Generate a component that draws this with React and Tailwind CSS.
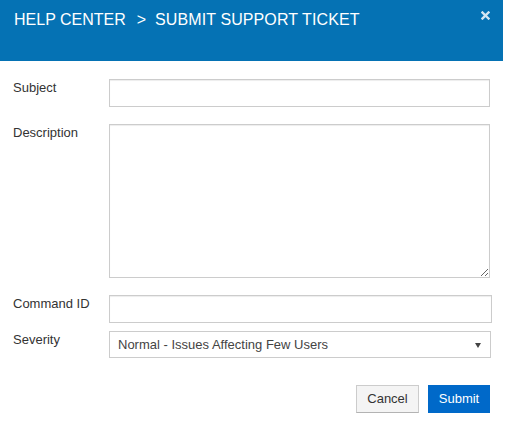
import React from "react";

function Field({ label, children, className = "" }) {
  return (
    <div className={`flex items-start ${className}`}>
      <label className="w-[96px] shrink-0 pt-[1px] text-[13px] leading-[16px] text-[#333]">
        {label}
      </label>
      {children}
    </div>
  );
}

export default function App() {
  const inputCls =
    "h-[28px] border border-[#ccc] bg-white shadow-[inset_0_1px_1px_rgba(0,0,0,0.075)] outline-none px-2 text-[13px] text-[#555]";

  return (
    <div
      className="w-[510px] h-[441px] bg-white"
      style={{ fontFamily: '"Liberation Sans", Arial, sans-serif' }}
    >
      <div className="w-[503px]">
        <div className="relative h-[61px] bg-[#0572b4] pl-[14px] pt-[10px]">
          <h1 className="flex items-center text-[16px] leading-[20px] text-white">
            <span>HELP CENTER</span>
            <span className="ml-[11px] mr-[9px]">&gt;</span>
            <span className="tracking-[0.1px]">SUBMIT SUPPORT TICKET</span>
          </h1>
          <button
            type="button"
            className="absolute right-[13px] top-[11px] w-[9px] h-[9px]"
            title="Close"
          >
            <svg viewBox="0 0 9 9" className="w-[9px] h-[9px]">
              <path
                d="M1.5 1.5 L7.5 7.5 M7.5 1.5 L1.5 7.5"
                stroke="#d3e5f2"
                strokeWidth="2.4"
                strokeLinecap="square"
              />
            </svg>
          </button>
        </div>

        <form className="pl-[13px] pt-[18px]">
          <Field label="Subject">
            <input type="text" className={`${inputCls} w-[381px]`} />
          </Field>

          <Field label="Description" className="mt-[17px]">
            <textarea
              className="w-[381px] h-[154px] border border-[#ccc] bg-white shadow-[inset_0_1px_1px_rgba(0,0,0,0.075)] outline-none p-2 text-[13px] text-[#555] resize"
            />
          </Field>

          <Field label="Command ID" className="mt-[17px]">
            <input type="text" className={`${inputCls} w-[383px]`} />
          </Field>

          <Field label="Severity" className="mt-[8px]">
            <div className="relative w-[382px] h-[27px] border border-[#ccc] bg-white flex items-center pl-[8px] text-[13px] text-[#444]">
              Normal - Issues Affecting Few Users
              <span className="absolute right-[9px] top-[11px] w-0 h-0 border-l-[3px] border-r-[3px] border-t-[5px] border-l-transparent border-r-transparent border-t-[#444]" />
            </div>
          </Field>

          <div className="flex justify-end gap-[9px] mt-[27px] pr-[13px]">
            <button
              type="button"
              className="w-[63px] h-[28px] bg-[#f4f4f4] border border-[#ccc] border-b-[#b3b3b3] text-[13px] text-[#333]"
            >
              Cancel
            </button>
            <button
              type="submit"
              className="w-[62px] h-[28px] bg-[#0069c9] text-[13px] font-medium text-white"
            >
              Submit
            </button>
          </div>
        </form>
      </div>
    </div>
  );
}
